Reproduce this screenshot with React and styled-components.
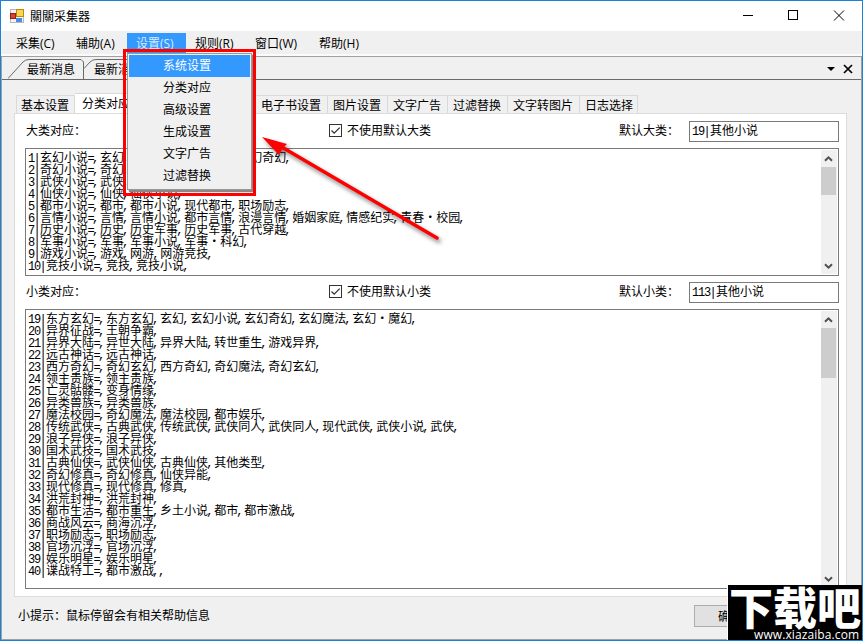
import React from "react";
import styled, { createGlobalStyle } from "styled-components";

const GlobalStyle = createGlobalStyle`
  * {
    box-sizing: border-box;
  }

  body {
    margin: 0;
    font-family: "Noto Sans CJK SC", sans-serif;
    font-size: 12px;
    line-height: 16px;
    color: #000;
    white-space: nowrap;
    overflow: hidden;
  }
`;

const Window = styled.div`
  position: relative;
  width: 863px;
  height: 641px;
  display: flex;
  flex-direction: column;
  border: 1px solid #1883d7;
  background-color: #f0f0f0;
  overflow: hidden;
`;

const TitleBar = styled.div`
  display: flex;
  align-items: center;
  gap: 6px;
  height: 30px;
  padding: 0 17px 0 9px;
  background-color: #fff;

  .title {
    flex: 1;
  }

  .controls {
    display: block;
  }
`;

const MenuBar = styled.div`
  display: flex;
  height: 25px;
  padding: 2px 0 2px 6px;
  border-bottom: 2px solid #fafbfd;
`;

const MenuItem = styled.div`
  width: ${(props) => props.$width}px;
  height: 20px;
  line-height: 22px;
  padding-left: 9px;
  font-family: "Open Sans", "Noto Sans CJK SC", sans-serif;
  color: ${(props) => (props.$active ? "#d8ebff" : "#000")};
  background-color: ${(props) => (props.$active ? "#3399ff" : "transparent")};
`;

const Client = styled.div`
  flex: 1;
  display: flex;
  flex-direction: column;
  border: 1px solid #a0a0a0;
`;

const DocumentTabs = styled.div`
  display: flex;
  align-items: flex-end;
  height: 23px;
  padding-left: 6px;
  border-bottom: 1px solid #696969;

  .tools {
    margin: 0 8px 5px auto;
  }
`;

const DocumentTab = styled.div`
  display: grid;
  width: ${(props) => props.$width}px;
  height: 20px;

  svg,
  span {
    grid-area: 1 / 1;
  }

  span {
    padding-left: ${(props) => props.$inset}px;
    line-height: 19px;
  }
`;

const Page = styled.div`
  flex: 1;
  display: flex;
  flex-direction: column;
  padding: 13px 14px 0 12px;
`;

const PageTabs = styled.div`
  display: flex;
  align-items: flex-end;
  height: 20px;
  padding-left: 2px;
`;

const PageTab = styled.div`
  width: ${(props) => props.$width}px;
  height: ${(props) => (props.$active ? 20 : 18)}px;
  line-height: ${(props) => (props.$active ? 18 : 17)}px;
  padding-left: ${(props) => props.$inset}px;
  border: 1px solid #d9d9d9;
  border-width: 1px 1px 0 ${(props) => (props.$first ? 1 : 0)}px;
  background-color: ${(props) => (props.$active ? "#fff" : "#f0f0f0")};
`;

const Panel = styled.div`
  height: 484px;
  padding: 7px 7px 0 10px;
  border: 1px solid #dcdcdc;
  background-color: #fff;
`;

const FieldRow = styled.div`
  display: grid;
  grid-template-columns: 304px 290px 70px 150px;
  height: 21px;
  margin-bottom: 6px;
  line-height: 17px;
`;

const Caption = styled.span`
  padding-left: 1px;
`;

const CheckLabel = styled.label`
  display: flex;
  align-items: flex-start;
  gap: 5px;

  svg {
    margin-top: 3px;
  }
`;

const TextBox = styled.div`
  height: 21px;
  padding-left: 2px;
  line-height: 16px;
  border: 1px solid #7a7a7a;
`;

const ListBox = styled.div`
  display: flex;
  justify-content: space-between;
  width: 814px;
  height: ${(props) => props.$height}px;
  margin-bottom: ${(props) => props.$gap}px;
  padding: 1px 2px 1px;
  border: 1px solid #7a7a7a;

  .lines {
    padding-top: 1px;
  }
`;

const Line = styled.div`
  height: 12px;
  line-height: 12px;
`;

const Narrow = styled.span`
  margin: 0 ${(props) => props.$shift}px 0 -${(props) => props.$shift}px;
  font-family: "Liberation Mono", monospace;
  letter-spacing: -1.2px;
`;

const ScrollBar = styled.div`
  display: flex;
  flex-direction: column;
  width: 16px;
  margin-right: -1px;
  background-color: #f0f0f0;

  .thumb {
    width: 15px;
    height: ${(props) => props.$thumb}px;
    margin-bottom: auto;
    background-color: #cdcdcd;
  }
`;

const Footer = styled.div`
  display: flex;
  justify-content: space-between;
  height: 22px;
  margin-top: 8px;
  padding-left: 4px;
  line-height: 19px;
`;

const Button = styled.div`
  width: 153px;
  height: 22px;
  padding-left: 23px;
  line-height: 19px;
  border: 1px solid #adadad;
  background-color: #e1e1e1;
`;

const DropDown = styled.div`
  position: absolute;
  left: 126px;
  top: 52px;
  width: 125px;
  height: 137px;
  padding: 1px;
  border: 1px solid #999;
  background-color: #f0f0f0;
  box-shadow: 2px 2px 1px #888;
`;

const DropDownItem = styled.div`
  height: 22px;
  padding-left: 34px;
  line-height: 20px;
  color: ${(props) => (props.$active ? "#fff" : "#000")};
  background-color: ${(props) => (props.$active ? "#3399ff" : "transparent")};
`;

const RedFrame = styled.div`
  position: absolute;
  left: 122px;
  top: 48px;
  width: 133px;
  height: 147px;
  border: 3px solid #fe0000;
`;

const Arrow = styled.svg`
  position: absolute;
  left: 249px;
  top: 119px;
`;

const SiteBadge = styled.div`
  position: absolute;
  left: 727px;
  top: 584px;
  width: 134px;
  height: 56px;
  background-color: #000;
  color: #fff;
  box-shadow: -1px 0 0 #fff;

  .name {
    height: 43px;
    padding-left: 1px;
    font-size: 44px;
    font-weight: 900;
    line-height: 42px;
  }

  .url {
    height: 13px;
    padding-left: 26px;
    font-family: "Open Sans", sans-serif;
    font-size: 12px;
    line-height: 14px;
    letter-spacing: 0.1px;
  }
`;

const menus = [
  { text: "采集(C)", width: 60 },
  { text: "辅助(A)", width: 60 },
  { text: "设置(S)", width: 59, active: true },
  { text: "规则(R)", width: 60 },
  { text: "窗口(W)", width: 64 },
  { text: "帮助(H)", width: 60 },
];

const settingMenu = [
  "系统设置",
  "分类对应",
  "高级设置",
  "生成设置",
  "文字广告",
  "过滤替换",
];

const pageTabs = [
  { text: "基本设置", width: 59, inset: 4 },
  { text: "分类对应", width: 61, inset: 7, active: true },
  { text: "标签设置", width: 60, inset: 5 },
  { text: "生成设置", width: 60, inset: 5 },
  { text: "电子书设置", width: 72, inset: 5 },
  { text: "图片设置", width: 60, inset: 5 },
  { text: "文字广告", width: 60, inset: 5 },
  { text: "过滤替换", width: 60, inset: 5 },
  { text: "文字转图片", width: 72, inset: 5 },
  { text: "日志选择", width: 58, inset: 5 },
];

const bigClasses = [
  "1|玄幻小说=,玄幻,玄幻小说,玄幻魔法,玄幻奇幻,",
  "2|奇幻小说=,奇幻,奇幻小说,",
  "3|武侠小说=,武侠,武侠小说,",
  "4|仙侠小说=,仙侠,仙侠小说,",
  "5|都市小说=,都市,都市小说,现代都市,职场励志,",
  "6|言情小说=,言情,言情小说,都市言情,浪漫言情,婚姻家庭,情感纪实,青春・校园,",
  "7|历史小说=,历史,历史军事,历史军事,古代穿越,",
  "8|军事小说=,军事,军事小说,军事・科幻,",
  "9|游戏小说=,游戏,网游,网游竞技,",
  "10|竞技小说=,竞技,竞技小说,",
];

const smallClasses = [
  "19|东方玄幻=,东方玄幻,玄幻,玄幻小说,玄幻奇幻,玄幻魔法,玄幻・魔幻,",
  "20|异界征战=,王朝争霸,",
  "21|异界大陆=,异世大陆,异界大陆,转世重生,游戏异界,",
  "22|远古神话=,远古神话,",
  "23|西方奇幻=,奇幻玄幻,西方奇幻,奇幻魔法,奇幻玄幻,",
  "24|领主贵族=,领主贵族,",
  "25|亡灵骷髅=,变身情缘,",
  "26|异类兽族=,异类兽族,",
  "27|魔法校园=,奇幻魔法,魔法校园,都市娱乐,",
  "28|传统武侠=,古典武侠,传统武侠,武侠同人,武侠同人,现代武侠,武侠小说,武侠,",
  "29|浪子异侠=,浪子异侠,",
  "30|国术武技=,国术武技,",
  "31|古典仙侠=,武侠仙侠,古典仙侠,其他类型,",
  "32|奇幻修真=,奇幻修真,仙侠异能,",
  "33|现代修真=,现代修真,修真,",
  "34|洪荒封神=,洪荒封神,",
  "35|都市生活=,都市重生,乡土小说,都市,都市激战,",
  "36|商战风云=,商海沉浮,",
  "37|职场励志=,职场励志,",
  "38|官场沉浮=,官场沉浮,",
  "39|娱乐明星=,娱乐明星,",
  "40|谍战特工=,都市激战,,",
];

const shifts = { ",": 2, "|": 0.6, "=": 0.5 };

// latin characters take exactly half the width of a chinese one
function HalfWidthText({ text }) {
  return text.split(/([0-9]+|[|=]|,+)/).map((part, i) =>
    i % 2 ? (
      <Narrow key={i} $shift={shifts[part[0]] || 0}>
        {part}
      </Narrow>
    ) : (
      part
    )
  );
}

function Chevron({ down }) {
  return (
    <svg width="15" height="17" style={{ flexShrink: 0 }}>
      <path
        d={down ? "M4 7.2L7.5 10.7L11 7.2" : "M4 10.8L7.5 7.3L11 10.8"}
        fill="none"
        stroke="#505050"
        strokeWidth="2"
      />
    </svg>
  );
}

function ClassList({ lines, height, thumb, gap }) {
  return (
    <ListBox $height={height} $gap={gap}>
      <div className="lines">
        {lines.map((line) => (
          <Line key={line}>
            <HalfWidthText text={line} />
          </Line>
        ))}
      </div>
      <ScrollBar $thumb={thumb}>
        <Chevron />
        <div className="thumb" />
        <Chevron down />
      </ScrollBar>
    </ListBox>
  );
}

function ClassFields({ kind, value }) {
  return (
    <FieldRow>
      <Caption>{kind}类对应：</Caption>
      <CheckLabel>
        <svg width="13" height="13">
          <rect x="0.5" y="0.5" width="12" height="12" fill="#fff" stroke="#333" />
          <path d="M2.5 6.5L5.2 9.2L10.7 3.6" fill="none" stroke="#333" strokeWidth="1.3" />
        </svg>
        不使用默认{kind}类
      </CheckLabel>
      <span>默认{kind}类：</span>
      <TextBox>
        <HalfWidthText text={value} />
      </TextBox>
    </FieldRow>
  );
}

function App() {
  return (
    <>
      <GlobalStyle />
      <Window>
        <TitleBar>
          <svg width="14" height="14">
            <rect x="0.5" y="0.5" width="13" height="13" fill="#f4f4f4" stroke="#b8b8b8" />
            <rect x="6.5" y="0.5" width="7" height="7" fill="#ffd34d" stroke="#b98a12" />
            <rect x="0.5" y="4.5" width="5" height="5" fill="#d8432f" stroke="#9c1c12" />
            <rect x="6" y="9" width="6" height="4" fill="#4b8ae8" />
          </svg>
          <span className="title">關關采集器</span>
          <svg className="controls" width="102" height="12" fill="none" stroke="#000">
            <path d="M0 5.5H10" />
            <rect x="45.5" y="0.5" width="9" height="9" />
            <path d="M91 0.5L101 10.5M101 0.5L91 10.5" />
          </svg>
        </TitleBar>
        <MenuBar>
          {menus.map((menu) => (
            <MenuItem key={menu.text} $width={menu.width} $active={menu.active}>
              {menu.text}
            </MenuItem>
          ))}
        </MenuBar>
        <Client>
          <DocumentTabs>
            <DocumentTab $width={76} $inset={19}>
              <svg width="76" height="20" fill="none" stroke="#696969">
                <path d="M0 19.5L15 3Q17.5 0.5 21 0.5H73L75.5 3V20" />
              </svg>
              <span>最新消息</span>
            </DocumentTab>
            <DocumentTab $width={68} $inset={10}>
              <svg width="68" height="20" fill="none" stroke="#696969">
                <path d="M0 9.5L6 3Q8.5 0.5 12 0.5H65L67.5 3V20" />
              </svg>
              <span>最新消息</span>
            </DocumentTab>
            <svg className="tools" width="26" height="10">
              <path d="M0 3H8L4 7Z" />
              <path d="M17 1L25 9M25 1L17 9" fill="none" stroke="#000" strokeWidth="1.7" />
            </svg>
          </DocumentTabs>
          <Page>
            <PageTabs>
              {pageTabs.map((tab, i) => (
                <PageTab
                  key={tab.text}
                  $width={tab.width}
                  $inset={tab.inset}
                  $active={tab.active}
                  $first={i === 0}
                >
                  {tab.text}
                </PageTab>
              ))}
            </PageTabs>
            <Panel>
              <ClassFields kind="大" value="19|其他小说" />
              <ClassList lines={bigClasses} height={128} thumb={28} gap={6} />
              <ClassFields kind="小" value="113|其他小说" />
              <ClassList lines={smallClasses} height={280} thumb={50} gap={0} />
            </Panel>
            <Footer>
              <span>小提示：鼠标停留会有相关帮助信息</span>
              <Button>确定</Button>
            </Footer>
          </Page>
        </Client>
        <DropDown>
          {settingMenu.map((text, i) => (
            <DropDownItem key={text} $active={i === 0}>
              {text}
            </DropDownItem>
          ))}
        </DropDown>
        <RedFrame />
        <Arrow width="200" height="130">
          <g style={{ filter: "drop-shadow(2px 3px 2px rgba(0, 0, 0, 0.5))" }}>
            <path d="M30 26L187 118" stroke="#fe0000" strokeWidth="3.5" strokeLinecap="round" />
            <path d="M12 17L37 24L33 28L29 35Z" fill="#fe0000" />
          </g>
        </Arrow>
        <SiteBadge>
          <div className="name">下载吧</div>
          <div className="url">www.xiazaiba.com</div>
        </SiteBadge>
      </Window>
    </>
  );
}

export default App;
